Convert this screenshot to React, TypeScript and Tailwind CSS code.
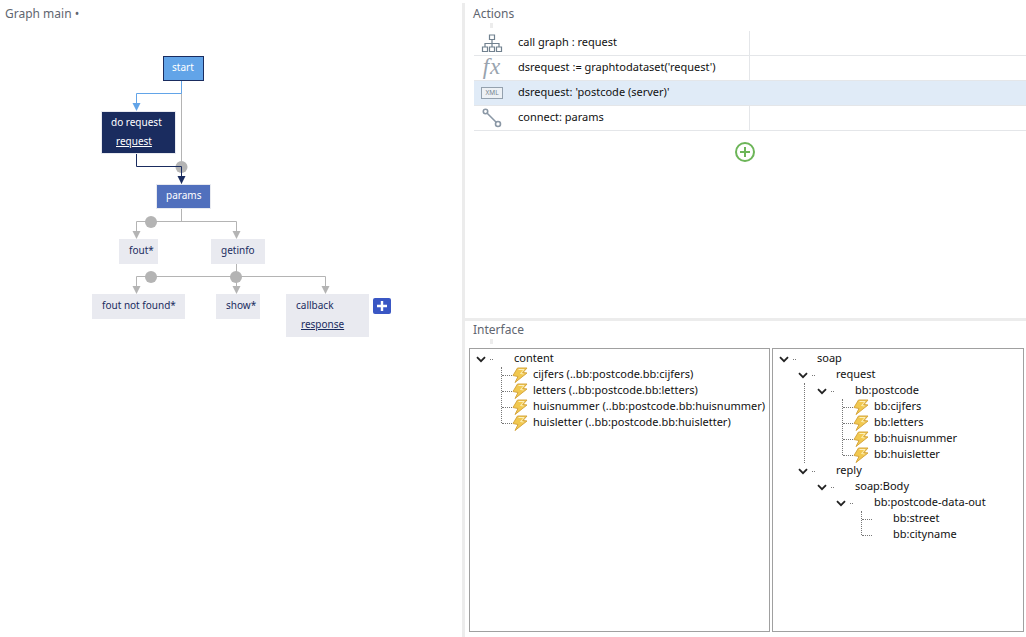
import type { ReactNode } from "react";

type TreeNode = {
  label: string;
  bolt?: boolean;
  guide?: boolean;
  children?: TreeNode[];
};

const contentTree: TreeNode[] = [
  {
    label: "content",
    children: [
      { label: "cijfers (..bb:postcode.bb:cijfers)", bolt: true },
      { label: "letters (..bb:postcode.bb:letters)", bolt: true },
      { label: "huisnummer (..bb:postcode.bb:huisnummer)", bolt: true },
      { label: "huisletter (..bb:postcode.bb:huisletter)", bolt: true },
    ],
  },
];

const soapTree: TreeNode[] = [
  {
    label: "soap",
    children: [
      {
        label: "request",
        guide: true,
        children: [
          {
            label: "bb:postcode",
            children: [
              { label: "bb:cijfers", bolt: true },
              { label: "bb:letters", bolt: true },
              { label: "bb:huisnummer", bolt: true },
              { label: "bb:huisletter", bolt: true },
            ],
          },
        ],
      },
      {
        label: "reply",
        children: [
          {
            label: "soap:Body",
            children: [
              {
                label: "bb:postcode-data-out",
                children: [{ label: "bb:street" }, { label: "bb:cityname" }],
              },
            ],
          },
        ],
      },
    ],
  },
];

function Bolt() {
  return (
    <svg width="16" height="16" viewBox="0 0 16 16" className="shrink-0">
      <path
        d="M5.5 1H15L11 5.5l4 .5L3 15.5 6 9.5 1 8.5z"
        fill="#f1c84f"
        stroke="#d6a640"
        strokeWidth="1"
        strokeLinejoin="round"
      />
      <path d="M6.5 2.5h5.5L8.5 6.5l3 .5" fill="none" stroke="#fcefbb" strokeWidth="1" />
    </svg>
  );
}

function Chevron() {
  return (
    <svg width="10" height="7" viewBox="0 0 10 7" className="shrink-0">
      <path d="M1 1.2l4 4 4-4" fill="none" stroke="#222" strokeWidth="1.8" />
    </svg>
  );
}

function TreeRow({ node, textLeft }: { node: TreeNode; textLeft: number }) {
  if (node.children) {
    return (
      <div className="flex h-4 items-center whitespace-nowrap" style={{ paddingLeft: textLeft - 38 }}>
        <Chevron />
        <span className="ml-[4px] w-[3px] border-t border-dotted border-[#777]" />
        <span className="ml-[21px] pb-[1px]">{node.label}</span>
      </div>
    );
  }
  return (
    <div className="flex h-4 items-center whitespace-nowrap" style={{ paddingLeft: textLeft - 31 }}>
      <span className="w-[10px] border-t border-dotted border-[#777]" />
      {node.bolt ? <Bolt /> : <span className="w-4 shrink-0" />}
      <span className="ml-[5px] pb-[1px]">{node.label}</span>
    </div>
  );
}

function TreeRows({ nodes, level }: { nodes: TreeNode[]; level: number }) {
  const textLeft = 44 + 19 * level;
  const isLeafGroup = nodes.every((n) => !n.children);

  return (
    <div className="relative">
      {isLeafGroup && (
        <div
          className="absolute top-0 bottom-2 border-l border-dotted border-[#777]"
          style={{ left: textLeft - 32 }}
        />
      )}
      {nodes.map((node) => (
        <div key={node.label} className="relative">
          <TreeRow node={node} textLeft={textLeft} />
          {node.guide && (
            <div
              className="absolute top-4 bottom-0 border-l border-dotted border-[#777]"
              style={{ left: textLeft - 32 }}
            />
          )}
          {node.children && <TreeRows nodes={node.children} level={level + 1} />}
        </div>
      ))}
    </div>
  );
}

function TreeBox({ nodes, className }: { nodes: TreeNode[]; className: string }) {
  return (
    <div className={`h-[284px] border border-[#a0a0a0] pt-[2px] text-[11px] text-[#111] ${className}`}>
      <TreeRows nodes={nodes} level={0} />
    </div>
  );
}

function OrgIcon() {
  return (
    <svg width="22" height="19" viewBox="0 0 22 19" fill="none" stroke="#71818f" strokeWidth="1.2">
      <path d="M8.5 1h5v4.5h-5zM1.5 13h5v4.5h-5zM8.5 13h5v4.5h-5zM15.5 13h5v4.5h-5z" />
      <path d="M11 5.5V13M4 13V9.5h14V13" />
    </svg>
  );
}

function FxIcon() {
  return (
    <span className="pb-[3px] font-['Liberation_Serif',serif] text-[23px] leading-none tracking-[1px] text-[#98a3ae] italic">
      fx
    </span>
  );
}

function XmlIcon() {
  return (
    <div className="flex h-[12px] w-[22px] items-center justify-center border border-[#94a1ae] bg-[#edf1f5] text-[6.5px] text-[#77838f]">
      XML
    </div>
  );
}

function ConnectIcon() {
  return (
    <svg width="20" height="20" viewBox="0 0 20 20" fill="none" stroke="#8a97a5" strokeWidth="1.6">
      <circle cx="3.5" cy="3.5" r="2.2" />
      <circle cx="16" cy="16" r="2.5" />
      <path d="M5.2 5.2l9 9" />
    </svg>
  );
}

function ActionRow({ icon, label, active }: { icon: ReactNode; label: string; active?: boolean }) {
  return (
    <div className={`flex h-[25px] border-b border-[#e4e6e9] ${active ? "bg-[#e0ebf7]" : ""}`}>
      <div className="flex w-[36px] shrink-0 items-center justify-center">{icon}</div>
      <div
        className={`flex w-[240px] shrink-0 items-center border-r pb-[2px] pl-[8px] text-[11px] text-[#111] ${
          active ? "border-transparent" : "border-[#e4e6e9]"
        }`}
      >
        {label}
      </div>
    </div>
  );
}

function GraphNode({
  className,
  label,
  link,
}: {
  className: string;
  label: string;
  link?: string;
}) {
  return (
    <div className={`absolute flex flex-col justify-center pb-[2px] text-[10px] leading-[19px] whitespace-nowrap ${className}`}>
      <span>{label}</span>
      {link && <span className="ml-[5px] underline">{link}</span>}
    </div>
  );
}

function GraphLines() {
  const gray = "#b4b4b4";
  const dots = [
    [181.5, 167],
    [151, 222],
    [151, 277],
    [236, 277],
  ];
  const grayHeads = [
    [136.5, 239],
    [236.5, 239],
    [136.5, 294],
    [236.5, 294],
    [325.5, 294],
  ];
  return (
    <svg width="462" height="637" className="absolute top-0 left-0">
      <g fill="none" stroke={gray}>
        <path d="M181.5 81V184" />
        <path d="M181.5 208V221.5M136.5 232V221.5H236.5V232" />
        <path d="M236.5 264V276.5M136.5 287V276.5H325.5V287M236.5 276.5V287" />
      </g>
      {dots.map(([x, y]) => (
        <circle key={`${x}-${y}`} cx={x} cy={y} r="6" fill={gray} />
      ))}
      {grayHeads.map(([x, y]) => (
        <path key={`${x}-${y}`} d={`M${x - 4} ${y - 8}h8l-4 8z`} fill={gray} />
      ))}
      <path d="M181.5 81V93.5H136.5V104" fill="none" stroke="#62a4e8" />
      <path d="M132.5 103h8l-4 8z" fill="#62a4e8" />
      <path d="M136.5 154V166.5H181.5V177" fill="none" stroke="#1a2c5f" />
      <path d="M177.5 176h8l-4 8z" fill="#1a2c5f" />
    </svg>
  );
}

function PanelTitle({ children }: { children: ReactNode }) {
  return (
    <div className="pl-[8px]">
      <div className="text-[12px] leading-4 text-[#5f6670]">{children}</div>
      <div className="mt-[1px] ml-[17px] h-[5px] w-[3px] bg-[#ececec]" />
    </div>
  );
}

export default function App() {
  return (
    <div className="flex h-[637px] w-[1026px] overflow-hidden bg-white font-['Noto_Sans',sans-serif]">
      <div className="relative w-[462px] shrink-0">
        <div className="pt-[6px] pl-[5px] text-[12px] leading-4 text-[#5f6670]">Graph main •</div>
        <GraphLines />
        <GraphNode className="top-[56px] left-[163px] h-[25px] w-[41px] border border-[#1a2c5f] bg-[#62a4e8] pl-[8px] text-white" label="start" />
        <GraphNode className="top-[111px] left-[101px] h-[43px] w-[75px] border border-[#e8eaf0] bg-[#1a2c5f] pl-[9px] text-white" label="do request" link="request" />
        <GraphNode className="top-[184px] left-[156px] h-[25px] w-[55px] border border-[#e8eaf0] bg-[#5170bd] pl-[9px] text-white" label="params" />
        <GraphNode className="top-[239px] left-[119px] h-[25px] w-[39px] bg-[#e9eaf0] pl-[10px] text-[#1a2c5f]" label="fout*" />
        <GraphNode className="top-[239px] left-[211px] h-[25px] w-[54px] bg-[#e9eaf0] pl-[10px] text-[#1a2c5f]" label="getinfo" />
        <GraphNode className="top-[294px] left-[92px] h-[25px] w-[93px] bg-[#e9eaf0] pl-[10px] text-[#1a2c5f]" label="fout not found*" />
        <GraphNode className="top-[294px] left-[216px] h-[25px] w-[44px] bg-[#e9eaf0] pl-[10px] text-[#1a2c5f]" label="show*" />
        <GraphNode className="top-[294px] left-[286px] h-[43px] w-[83px] bg-[#e9eaf0] pl-[10px] text-[#1a2c5f]" label="callback" link="response" />
        <div className="absolute top-[298px] left-[373px] flex h-4 w-[18px] items-center justify-center rounded-[2px] bg-[#3a57c4]">
          <svg width="12" height="12" viewBox="0 0 12 12" stroke="white" strokeWidth="2.4">
            <path d="M6 1v10M1 6h10" />
          </svg>
        </div>
      </div>

      <div className="mt-[3px] w-[3px] shrink-0 bg-[#ececec]" />

      <div className="flex flex-1 flex-col">
        <div className="h-[318px] shrink-0 pt-[6px]">
          <PanelTitle>Actions</PanelTitle>
          <div className="mt-[3px] ml-[9px]">
            <ActionRow icon={<OrgIcon />} label="call graph : request" />
            <ActionRow icon={<FxIcon />} label="dsrequest := graphtodataset('request')" />
            <ActionRow icon={<XmlIcon />} label="dsrequest: 'postcode (server)'" active />
            <ActionRow icon={<ConnectIcon />} label="connect: params" />
          </div>
          <div className="mt-[11px] ml-[270px]">
            <svg width="20" height="20" viewBox="0 0 20 20" fill="none" stroke="#6cb558" strokeWidth="2">
              <circle cx="10" cy="10" r="9" />
              <path d="M10 5v10M5 10h10" />
            </svg>
          </div>
        </div>
        <div className="h-[3px] shrink-0 bg-[#ececec]" />
        <div className="flex-1 pt-[1px]">
          <PanelTitle>Interface</PanelTitle>
          <div className="mt-[4px] flex gap-[2px] pl-[4px]">
            <TreeBox nodes={contentTree} className="w-[301px]" />
            <TreeBox nodes={soapTree} className="w-[252px]" />
          </div>
        </div>
      </div>
    </div>
  );
}
